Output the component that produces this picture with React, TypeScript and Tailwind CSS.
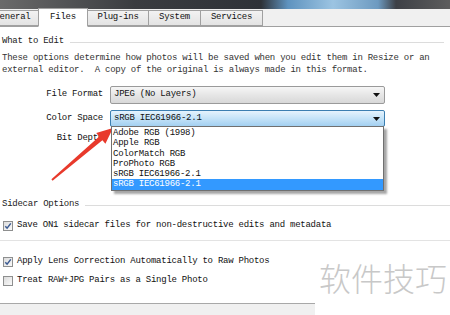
import React from "react";

const mono = "font-['NSimSun','Liberation_Mono',monospace] text-[9px] tracking-[-0.25px]";

function Tab({ label, active, className }: { label: string; active?: boolean; className: string }) {
  return (
    <div
      className={`flex items-center justify-center border border-[#a0a0a0] ${
        active ? "bg-white border-b-white h-[19px] -mb-px z-10" : "bg-[linear-gradient(#f2f2f2,#e3e3e3)] h-[16px]"
      } ${className}`}
    >
      <span className={`${mono} text-[#111]`}>{label}</span>
    </div>
  );
}

function Arrow() {
  return (
    <svg className="absolute inset-0 pointer-events-none" width="450" height="315">
      <polygon
        points="51.4,179.3 99.2,136.5 96.2,133.1 113,128 105.4,143.7 102.4,140.3 52.6,180.7"
        fill="#e8392b"
      />
    </svg>
  );
}

function Check({ checked }: { checked?: boolean }) {
  return (
    <div className="w-[10px] h-[10px] border border-[#8e8f8f] bg-[linear-gradient(135deg,#dcdcdc,#fafafa)] flex items-center justify-center">
      {checked && (
        <svg width="8" height="8" viewBox="0 0 8 8">
          <path d="M1.3 4.2 L3.1 6.2 L6.8 1.4" fill="none" stroke="#3b5a92" strokeWidth="1.5" />
        </svg>
      )}
    </div>
  );
}

function Caret() {
  return (
    <svg width="7" height="4" viewBox="0 0 7 4">
      <path d="M0 0 L7 0 L3.5 4 Z" fill="#111" />
    </svg>
  );
}

const spaces = ["Adobe RGB (1998)", "Apple RGB", "ColorMatch RGB", "ProPhoto RGB", "sRGB IEC61966-2.1"];

export default function App() {
  return (
    <div className="relative w-[450px] h-[315px] overflow-hidden bg-white flex flex-col">
      <div className="h-[9px] bg-[linear-gradient(90deg,#6a6a6a_0%,#3a3c40_30%,#2e3238_58%,#5f93bf_64%,#9cc4e2_74%,#6d9ac0_84%,#3d4046_88%,#5d5d5d_100%)]" />
      <div className="relative h-[18px] bg-[#f0f0f0] border-b border-[#a0a0a0] flex items-end">
        <Tab label="General" className="ml-[-14px] w-[53px]" />
        <Tab label="Files" active className="w-[50px] -ml-px" />
        <Tab label="Plug-ins" className="w-[62px] -ml-px" />
        <Tab label="System" className="w-[53px] -ml-px" />
        <Tab label="Services" className="w-[63px] -ml-px" />
      </div>

      <div className="flex items-center gap-[6px] mt-[9px] pl-[2px] pr-[6px] h-[12px]">
        <span className={`${mono} text-[#222]`}>What to Edit</span>
        <div className="flex-1 h-px bg-[#dcdcdc]" />
      </div>

      <div className={`${mono} text-[#333] pl-[2px] mt-[4px] leading-[12px] whitespace-pre`}>
        {"These options determine how photos will be saved when you edit them in Resize or an\nexternal editor.  A copy of the original is always made in this format."}
      </div>

      <div className="flex items-center mt-[10px] h-[18px]">
        <span className={`${mono} w-[103px] text-right text-[#111]`}>File Format</span>
        <div className="ml-[7px] w-[275px] h-[18px] rounded-[2px] border border-[#9a9a9a] bg-[linear-gradient(#f6f6f6,#e6e6e6_50%,#d8d8d8)] flex items-center justify-between pl-[3px] pr-[4px]">
          <span className={`${mono} text-[#111]`}>JPEG (No Layers)</span>
          <Caret />
        </div>
      </div>

      <div className="relative flex items-center mt-[6px] h-[17px]">
        <span className={`${mono} w-[103px] text-right text-[#111]`}>Color Space</span>
        <div className="ml-[7px] w-[275px] h-[17px] rounded-[2px] border border-[#3c7fb1] bg-[linear-gradient(#e5f3fd,#c4e3f8_50%,#a3d0f1)] flex items-center justify-between pl-[3px] pr-[4px]">
          <span className={`${mono} text-[#111]`}>sRGB IEC61966-2.1</span>
          <Caret />
        </div>
        <div className="absolute left-[111px] top-[16px] w-[273px] bg-white border border-[#707070] shadow-[3px_3px_2px_rgba(0,0,0,0.35)] z-20 flex flex-col pt-[1px]">
          {spaces.map((s) => (
            <div key={s} className={`${mono} text-[#111] h-[10.3px] leading-[10px] pl-[1px]`}>
              {s}
            </div>
          ))}
          <div className={`${mono} text-white bg-[#3399ff] h-[10.3px] leading-[10px] pl-[1px]`}>sRGB IEC61966-2.1</div>
        </div>
      </div>

      <div className="flex items-center mt-[6px] h-[12px]">
        <span className={`${mono} w-[103px] text-right text-[#111]`}>Bit Depth</span>
      </div>

      <div className="flex items-center gap-[6px] mt-[54px] pl-[2px] h-[12px]">
        <span className={`${mono} text-[#222]`}>Sidecar Options</span>
        <div className="flex-1 h-px bg-[#dcdcdc]" />
      </div>

      <div className="flex items-center gap-[4px] pl-[3px] mt-[9px] h-[12px]">
        <Check checked />
        <span className={`${mono} text-[#111]`}>Save ON1 sidecar files for non-destructive edits and metadata</span>
      </div>

      <div className="h-px bg-[#e3e3e3] mt-[8px]" />

      <div className="flex items-center gap-[4px] pl-[3px] mt-[15px] h-[12px]">
        <Check checked />
        <span className={`${mono} text-[#111]`}>Apply Lens Correction Automatically to Raw Photos</span>
      </div>

      <div className="flex items-center gap-[4px] pl-[3px] mt-[7px] h-[12px]">
        <Check />
        <span className={`${mono} text-[#111]`}>Treat RAW+JPG Pairs as a Single Photo</span>
      </div>

      <div className="mt-auto w-[315px] h-[12px] bg-[#f0f0f0] border-t border-[#a8a8a8]" />

      <div className="absolute left-[319px] top-[258px] text-[32px] leading-[38px] text-[#c8c8c8] font-['Noto_Sans_CJK_SC',sans-serif] font-light">
        软件技巧
      </div>

      <Arrow />
    </div>
  );
}
